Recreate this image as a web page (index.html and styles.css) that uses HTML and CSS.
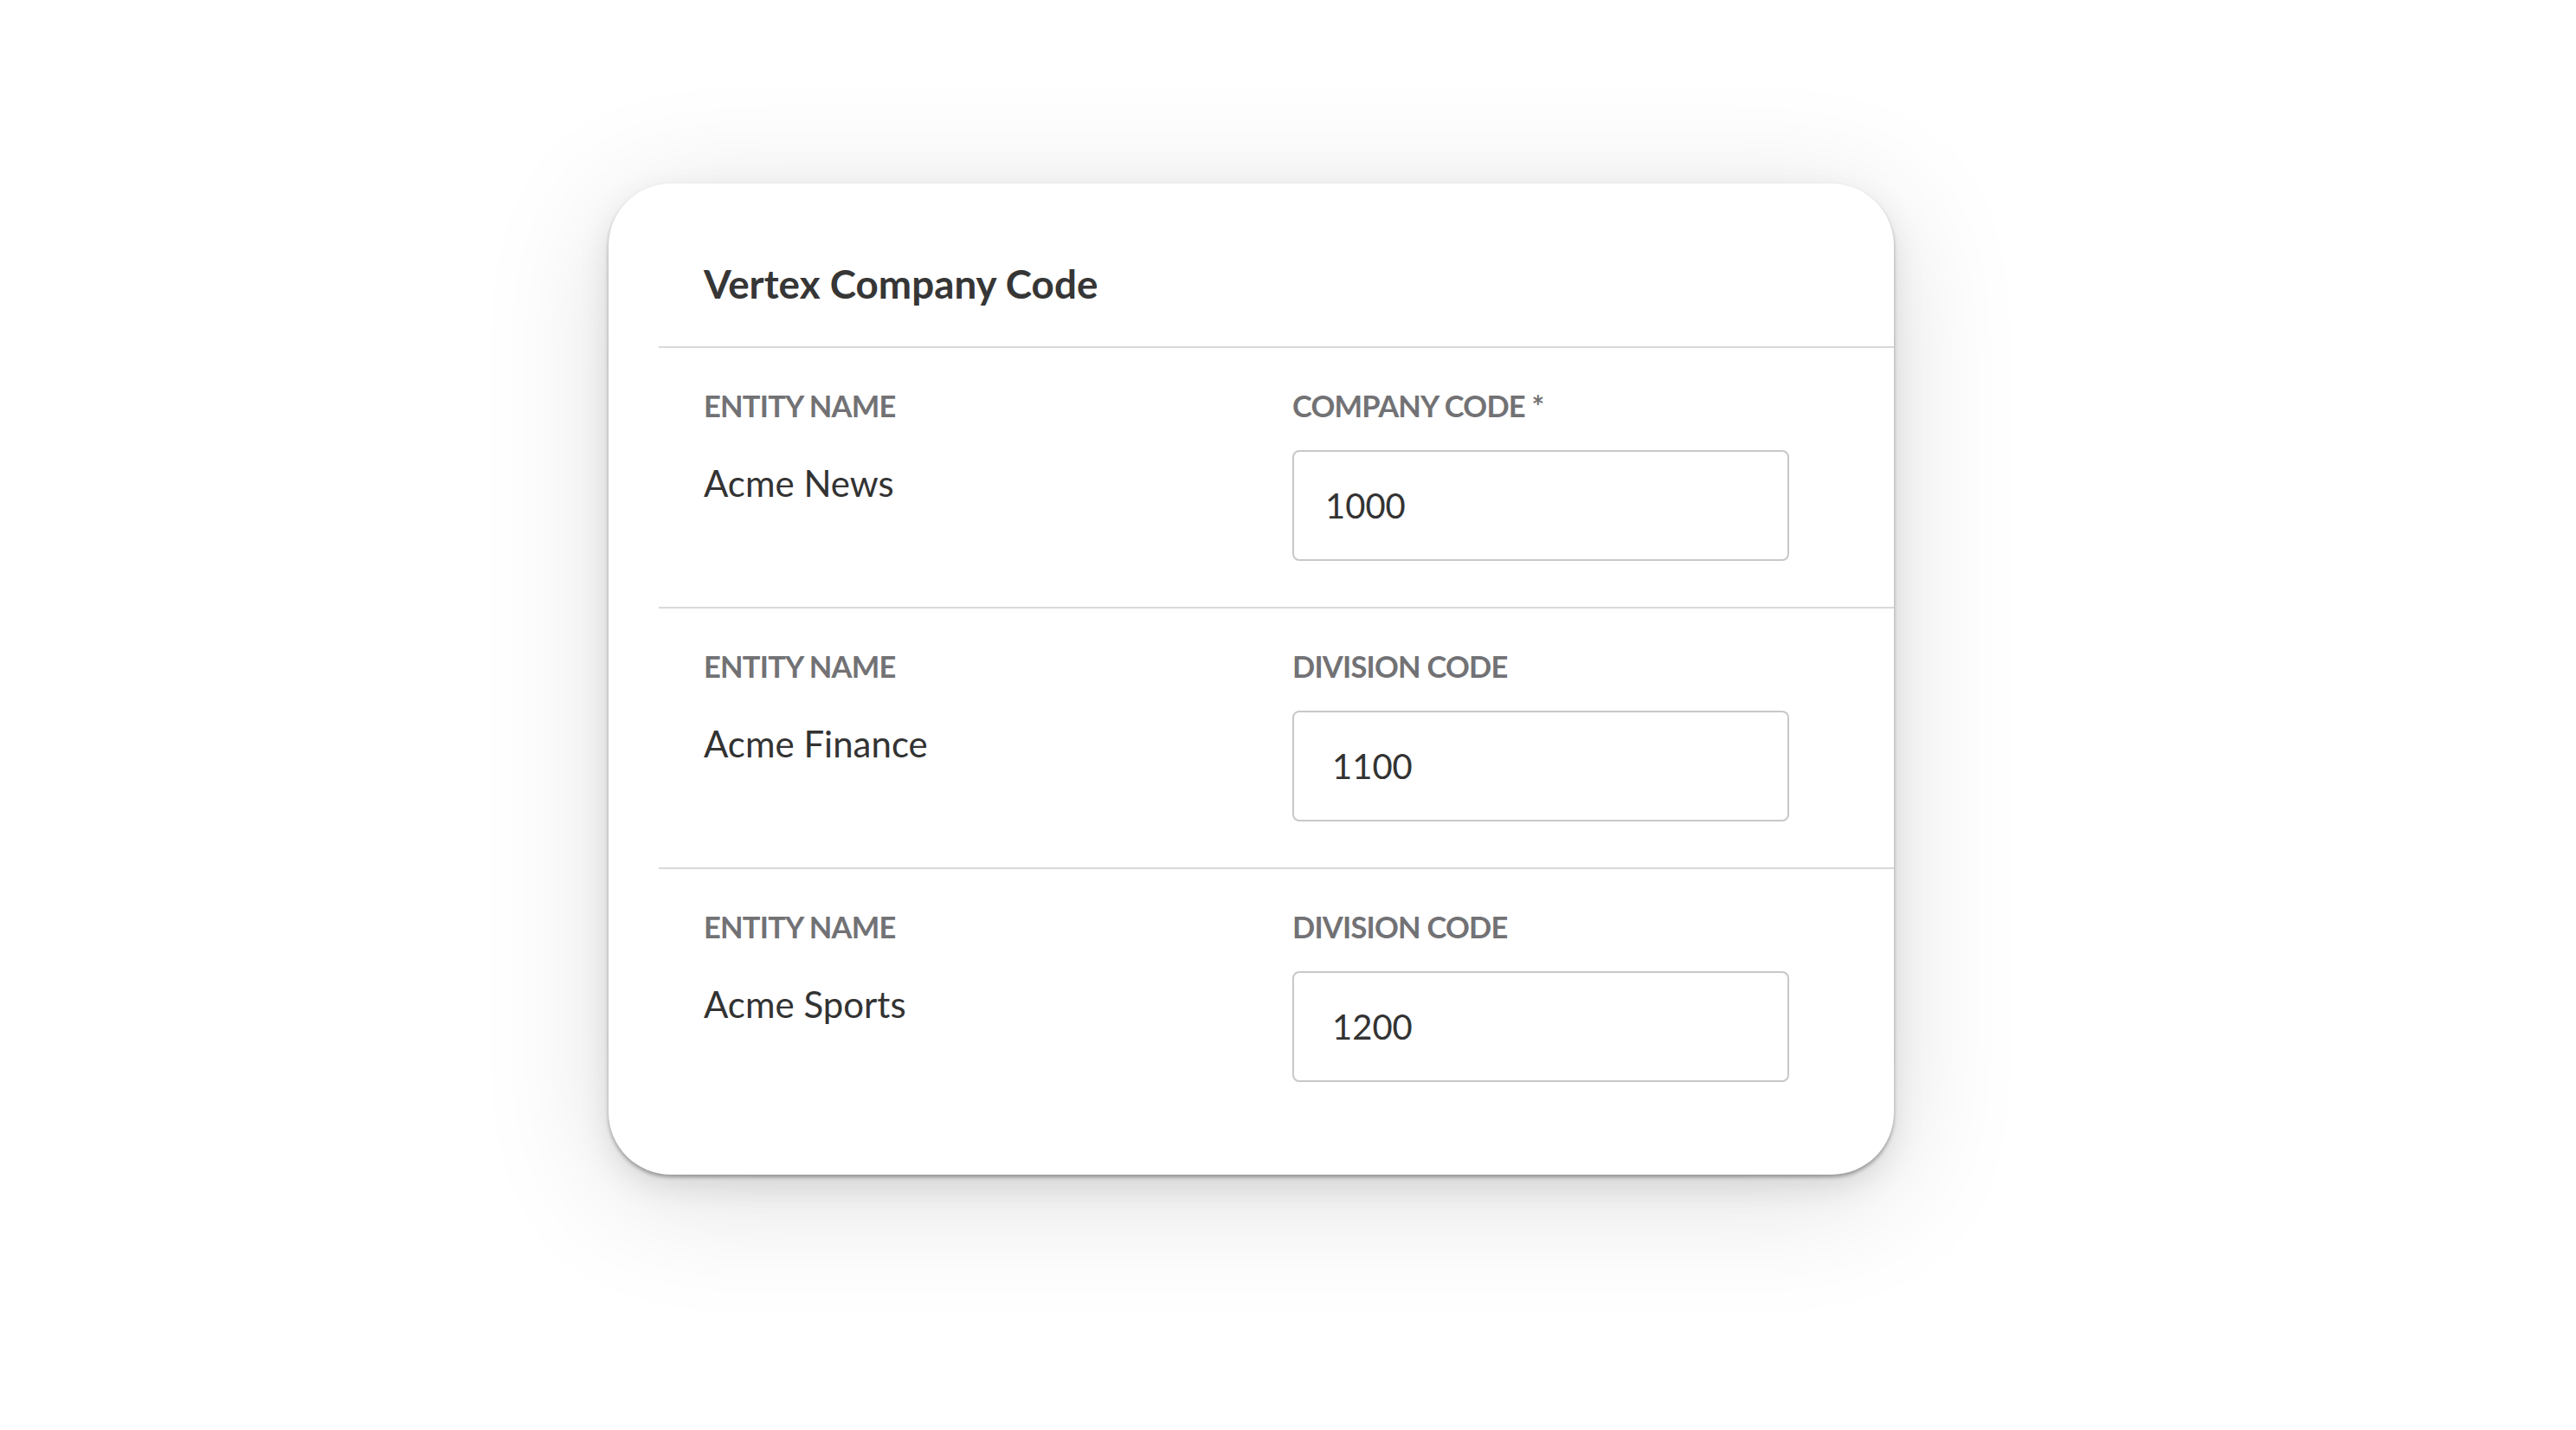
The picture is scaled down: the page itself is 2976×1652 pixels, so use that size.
FILE: index.html
```html
<!DOCTYPE html>
<html lang="en">
<head>
<meta charset="utf-8">
<title>Vertex Company Code</title>
<link rel="stylesheet" href="styles.css">
</head>
<body>
<main class="stage">
  <section class="card">
    <header class="card__header">
      <h1 class="card__title">Vertex Company Code</h1>
    </header>
    <div class="row">
      <div class="field">
        <div class="field__label">ENTITY NAME</div>
        <div class="field__value">Acme News</div>
      </div>
      <div class="field">
        <label class="field__label" for="code-1">COMPANY CODE *</label>
        <input class="field__input field__input--tight" id="code-1" type="text" value="1000">
      </div>
    </div>
    <div class="row">
      <div class="field">
        <div class="field__label">ENTITY NAME</div>
        <div class="field__value">Acme Finance</div>
      </div>
      <div class="field">
        <label class="field__label" for="code-2">DIVISION CODE</label>
        <input class="field__input" id="code-2" type="text" value="1100">
      </div>
    </div>
    <div class="row row--last">
      <div class="field">
        <div class="field__label">ENTITY NAME</div>
        <div class="field__value">Acme Sports</div>
      </div>
      <div class="field">
        <label class="field__label" for="code-3">DIVISION CODE</label>
        <input class="field__input" id="code-3" type="text" value="1200">
      </div>
    </div>
  </section>
</main>
</body>
</html>
```

FILE: styles.css
```css
* { box-sizing: border-box; }

html, body {
  margin: 0;
  background: #ffffff;
}

body {
  width: 2976px;
  height: 1652px;
  overflow: hidden;
  font-family: "Lato", "Source Sans Pro", "Liberation Sans", sans-serif;
  color: #333333;
}

.stage {
  padding: 212px 0 0 703px;
}

.card {
  width: 1485px;
  height: 1145px;
  background: #ffffff;
  border-radius: 72px;
  box-shadow:
    0 3px 4px rgba(0, 0, 0, 0.32),
    0 14px 36px rgba(0, 0, 0, 0.10),
    0 24px 150px rgba(0, 0, 0, 0.13);
  overflow: hidden;
}

.card__header {
  padding: 86px 0 42px 110px;
}

.card__title {
  margin: 0;
  font-size: 45.8px;
  line-height: 60px;
  font-weight: 700;
  color: #363636;
}

.row {
  margin-left: 58px;
  border-top: 2px solid #d9d9d9;
  padding: 45px 0 54px 52px;
  display: grid;
  grid-template-columns: 680px 574px;
  height: 301px;
}

.row--last {
  height: auto;
}

.field {
  display: flex;
  flex-direction: column;
  align-items: flex-start;
}

.field__label {
  font-size: 34.5px;
  line-height: 44px;
  font-weight: 700;
  letter-spacing: -0.8px;
  color: #727275;
}

.field__value {
  margin-top: 42px;
  font-size: 42px;
  line-height: 50px;
  font-weight: 400;
  color: #333333;
}

.field__input {
  margin-top: 29px;
  width: 574px;
  height: 128px;
  border: 2px solid #c8c8c8;
  border-radius: 8px;
  padding: 0 0 0 44px;
  font-family: inherit;
  font-size: 40px;
  color: #333333;
  background: #ffffff;
  outline: none;
}

.field__input--tight {
  padding-left: 36px;
}
```
